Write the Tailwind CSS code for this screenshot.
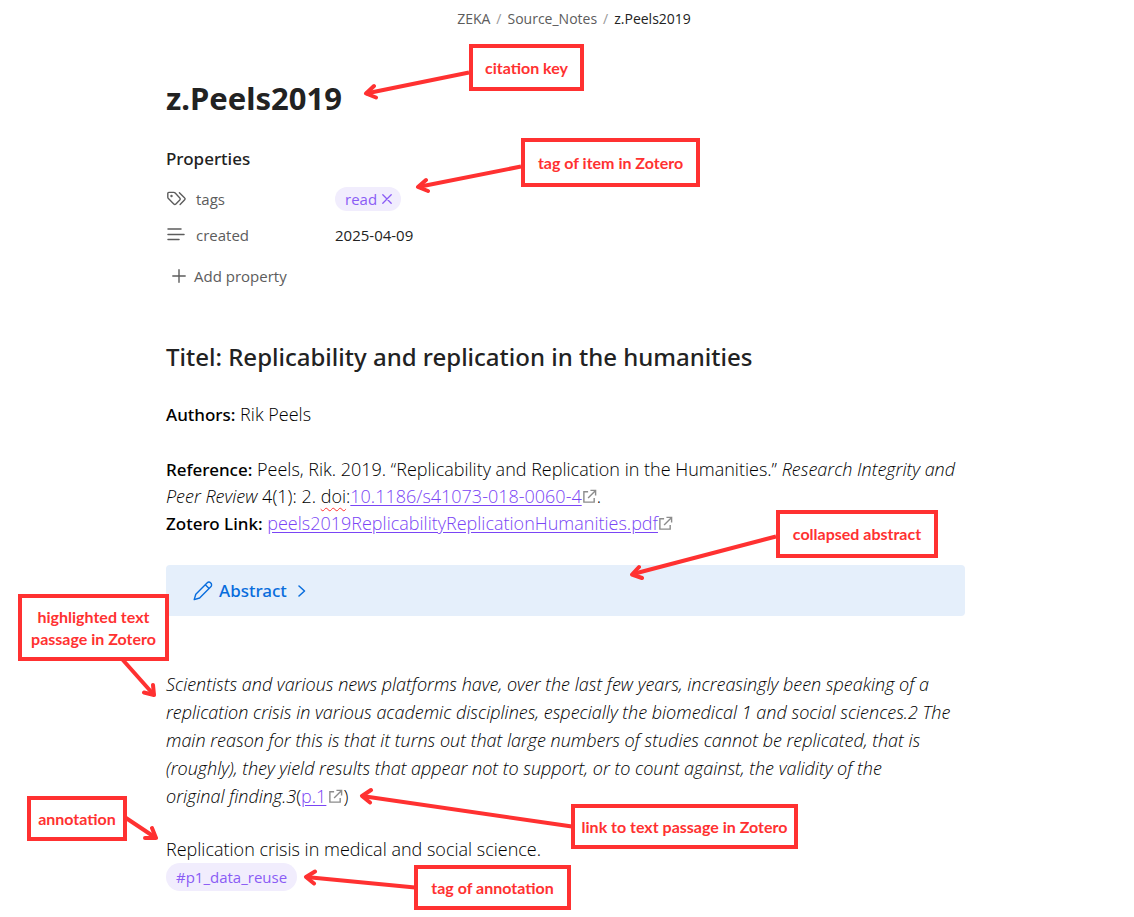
<!DOCTYPE html>
<html lang="en">
<head>
<meta charset="utf-8">
<meta name="viewport" content="width=device-width, initial-scale=1">
<title>z.Peels2019</title>
<script src="https://cdn.jsdelivr.net/npm/@tailwindcss/browser@4"></script>
</head>
<body class="bg-white font-['Open_Sans',sans-serif] text-[#222222]">
<svg class="hidden" aria-hidden="true">
  <symbol id="external" viewBox="0 0 16 16"><path d="M6.500 3H2v11h11V9.500M9 1.500h5.500V7M14.500 1.500L6.500 9.500" fill="none" stroke="#8c8c8c" stroke-width="1.500"/></symbol>
</svg>
<div class="relative min-h-[917px] overflow-hidden">
  <nav aria-label="Breadcrumb" class="flex h-[36px] items-center justify-center gap-[6px] pl-[14px] text-[14px] text-[#5c5c5c]">
    <a href="#">ZEKA</a><span class="text-[#999]">/</span><a href="#">Source_Notes</a><span class="text-[#999]">/</span><span class="text-[#222]">z.Peels2019</span>
  </nav>

  <main class="ml-[166px] max-w-[799px] pt-[40px] text-[18px] leading-[28px] font-light text-black">
    <h1 class="font-['Noto_Sans',sans-serif] text-[31px] leading-[44px] font-bold text-[#222]">z.Peels2019</h1>

    <section class="mt-[25px] text-[15px] font-normal text-[#5c5c5c]">
      <h2 class="font-['Noto_Sans',sans-serif] text-[17px] font-medium text-[#222]">Properties</h2>
      <div class="mt-[8px] flex h-[36px] items-center">
        <div class="flex w-[169px] items-center gap-[9px]">
          <svg class="h-[20px] w-[21px]" viewBox="0 0 21 20" fill="none" stroke="currentColor" stroke-width="1.400" stroke-linecap="round" stroke-linejoin="round"><path d="M7.800 3.400H2.800a1 1 0 0 0-1 1v3.800a2 2 0 0 0 .6 1.400l5.400 5.300a1.500 1.500 0 0 0 2.100 0l3.900-3.900a1.500 1.500 0 0 0 0-2.100L9.200 4a2 2 0 0 0-1.400-.6zM13.400 3.700l5.300 5.200a1.300 1.300 0 0 1 0 1.900l-4.600 4.700"/><circle cx="5.500" cy="7" r=".5" fill="currentColor"/></svg>
          <span>tags</span>
        </div>
        <span class="flex h-[24px] items-center gap-[5px] rounded-full bg-[#f1edfd] pr-[9px] pl-[10px] text-[#8a5cf5]">read
          <button type="button" aria-label="Remove tag read" class="flex"><svg class="size-[10px]" viewBox="0 0 10 10" fill="none" stroke="currentColor" stroke-width="1.300" stroke-linecap="round"><path d="M.8.8l8.400 8.400M9.200.8L.8 9.200"/></svg></button>
        </span>
      </div>
      <div class="flex h-[36px] items-center">
        <div class="flex w-[169px] items-center gap-[9px]">
          <svg class="h-[20px] w-[21px]" viewBox="0 0 21 20" fill="none" stroke="currentColor" stroke-width="1.500" stroke-linecap="round"><path d="M2 4h13M2 9.500h16M2 14.500h11"/></svg>
          <span>created</span>
        </div>
        <span class="text-[#222]">2025-04-09</span>
      </div>
      <button type="button" class="mt-[9px] flex items-center gap-[8px] pl-[6px]"><svg class="size-[14px]" viewBox="0 0 14 14" fill="none" stroke="currentColor" stroke-width="1.400" stroke-linecap="round"><path d="M7 .8v12.400M.8 7h12.400"/></svg>Add property</button>
    </section>

    <h2 class="mt-[49px] font-['Noto_Sans',sans-serif] text-[24px] leading-[36px] font-medium text-[#222]">Titel: Replicability and replication in the humanities</h2>
    <p class="mt-[25px]"><b class="font-['Noto_Sans',sans-serif] text-[17px] leading-none font-medium">Authors:</b> Rik Peels</p>
    <p class="mt-[28px] leading-[27px]"><b class="font-['Noto_Sans',sans-serif] text-[17px] leading-none font-medium">Reference:</b> Peels, Rik. 2019. “Replicability and Replication in the Humanities.” <i>Research Integrity and Peer Review</i> 4(1): 2. <span class="underline decoration-[#f33] decoration-wavy decoration-1 underline-offset-4">doi</span>:<a href="#" class="text-[#7a45f5] underline underline-offset-2">10.1186/s41073-018-0060-4</a><svg class="inline size-[15px] align-[-1px]"><use href="#external"/></svg>.<br>
      <b class="font-['Noto_Sans',sans-serif] text-[17px] leading-none font-medium">Zotero Link:</b> <a href="#" class="text-[#7a45f5] underline underline-offset-2">peels2019ReplicabilityReplicationHumanities.pdf</a><svg class="inline size-[15px] align-[-1px]"><use href="#external"/></svg></p>

    <button type="button" class="mt-[28px] flex h-[51px] w-full items-center rounded-[4px] bg-[#e5effb] pl-[27px] font-['Noto_Sans',sans-serif] text-[17px] font-medium text-[#086ddd]">
      <svg class="mr-[6px] size-[20px]" viewBox="0 0 20 20" fill="none" stroke="currentColor" stroke-width="1.400" stroke-linecap="round" stroke-linejoin="round"><path d="M2.800 13.200L14 2a2.600 2.600 0 0 1 3.800 3.800L6.600 17 1.200 18.600zM12.300 3.700l3.800 3.800"/></svg>
      Abstract
      <svg class="ml-[11px] h-[12px] w-[8px]" viewBox="0 0 8 12" fill="none" stroke="currentColor" stroke-width="1.500" stroke-linecap="round" stroke-linejoin="round"><path d="M1 1l5.500 5L1 11"/></svg>
    </button>

    <p class="mt-[54px]"><i>Scientists and various news platforms have, over the last few years, increasingly been speaking of a replication crisis in various academic disciplines, especially the biomedical 1 and social sciences.2 The main reason for this is that it turns out that large numbers of studies cannot be replicated, that is (roughly), they yield results that appear not to support, or to count against, the validity of the<br>original finding.3</i>(<a href="#" class="text-[#7a45f5] underline underline-offset-2">p.1</a><svg class="ml-[2px] inline size-[15px] align-[-1px]"><use href="#external"/></svg>)</p>
    <p class="mt-[25px]">Replication crisis in medical and social science.</p>
    <a href="#" class="flex h-[28px] w-fit items-center rounded-full bg-[#f1edfd] px-[10px] text-[15px] font-normal text-[#8a5cf5]">#p1_data_reuse</a>
  </main>

  <!-- Callouts laid over the note -->
  <svg class="pointer-events-none absolute top-0 left-0 h-[917px] w-[1134px]" viewBox="0 0 1134 917" fill="none" stroke="#ff3131" stroke-width="4" stroke-linejoin="round" aria-hidden="true">
    <path d="M469 72.500L366 93.500M521 166.500L418 187M776 536.500L633 574M122 659l32 36M126 818l30 20M572 826.500L362 796M415 887.500L306 877"/>
    <path stroke-linecap="round" d="M374 86l-8 7.500 10 4M426 180l-8 7 10 4M639 567l-7 7.500 10 3.500M153 685l1 10-10-2.500M152 828l4 10-11 0M371 790l-9 6 8 6.500M315 871.500l-9 5.500 8 6.500"/>
  </svg>
  <div class="font-['Lato',sans-serif] text-[16px] leading-[22px] font-bold text-[#ff3131]">
    <div class="absolute top-[44px] left-[469px] flex h-[47px] w-[115px] items-center justify-center border-4 border-[#ff3131] bg-white">citation key</div>
    <div class="absolute top-[138px] left-[521px] flex h-[49px] w-[179px] items-center justify-center border-4 border-[#ff3131] bg-white">tag of item in Zotero</div>
    <div class="absolute top-[510px] left-[776px] flex h-[48px] w-[162px] items-center justify-center border-4 border-[#ff3131] bg-white">collapsed abstract</div>
    <div class="absolute top-[594px] left-[18px] flex h-[67px] w-[151px] items-center justify-center border-4 border-[#ff3131] bg-white text-center">highlighted text<br>passage in Zotero</div>
    <div class="absolute top-[796px] left-[27px] flex h-[45px] w-[100px] items-center justify-center border-4 border-[#ff3131] bg-white">annotation</div>
    <div class="absolute top-[804px] left-[571px] flex h-[45px] w-[227px] items-center justify-center border-4 border-[#ff3131] bg-white whitespace-nowrap">link to text passage in Zotero</div>
    <div class="absolute top-[865px] left-[414px] flex h-[45px] w-[157px] items-center justify-center border-4 border-[#ff3131] bg-white">tag of annotation</div>
  </div>
</div>
</body>
</html>
